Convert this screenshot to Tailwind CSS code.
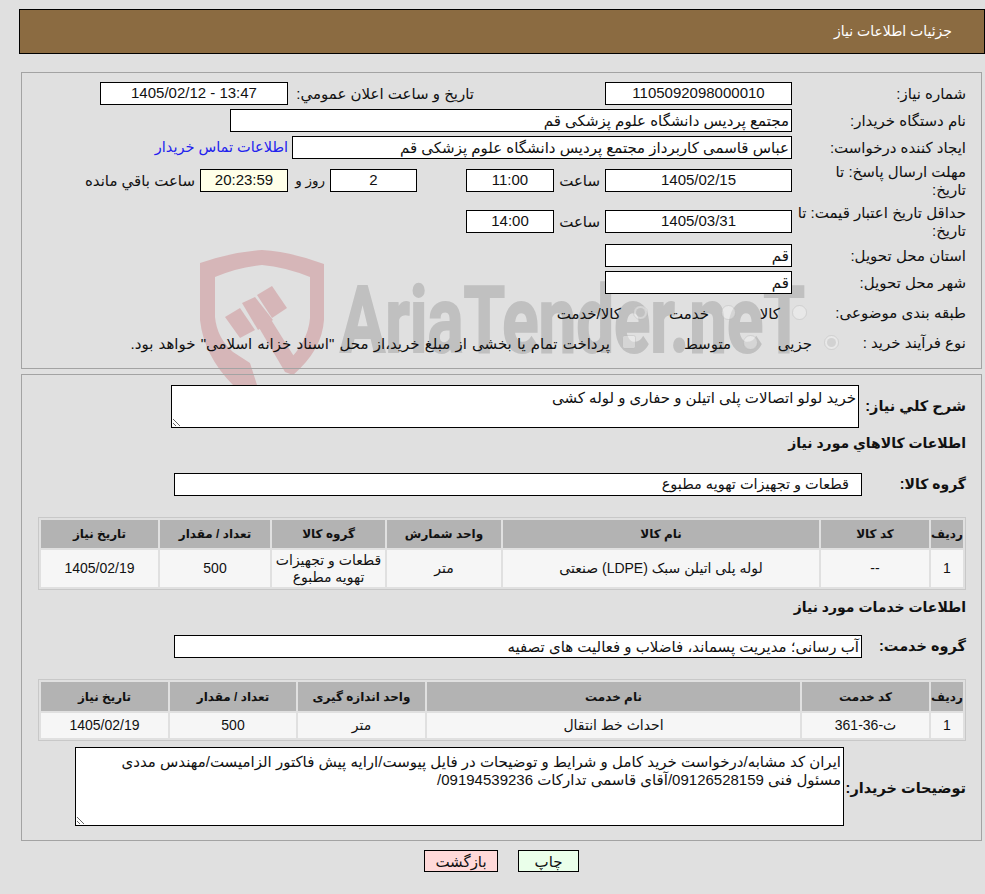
<!DOCTYPE html>
<html lang="fa" dir="rtl">
  <head>
    <meta charset="UTF-8" />
    <title>جزئیات اطلاعات نیاز</title>
    <script src="https://cdn.jsdelivr.net/npm/@tailwindcss/browser@4"></script>
  </head>
  <body class="relative h-[894px] w-[985px] overflow-hidden bg-[#e0e0e0] text-[15px] text-[#111] font-['Liberation_Sans','DejaVu_Sans',sans-serif]">
    <!-- watermark -->
    <svg class="absolute left-0 top-0 [direction:ltr]" width="985" height="400" viewBox="0 0 985 400">
      <g fill="#d6b6b8">
        <path d="M200 263 Q232 252 262 250 Q292 252 324 264 L324 320 Q322 350 293 375 L287 362 Q308 342 310 318 L310 277 Q285 267 262 265 Q238 267 215 277 L215 317 Q217 338 233 352 L250 363 L257 385 L233 385 Q204 356 200 320 Z" />
        <path d="M225 317 L240 308 L255 330 L240 338 Z" />
        <path d="M242 303 L255 297 L273 320 L258 330 Z" />
        <path d="M257 295 L272 286 L287 308 L272 318 Z" />
        <path d="M258 326 L270 318 L300 366 L293 375 L285 372 Z" />
      </g>
      <text x="340" y="352" textLength="465" lengthAdjust="spacingAndGlyphs" font-family="Roboto" font-weight="700" font-size="92" fill="#c0c0c0" stroke="#c0c0c0" stroke-width="2">AriaTender.neT</text>
    </svg>

    <div class="relative">
      <div class="absolute left-[19px] top-[9px] flex h-[45px] w-[966px] items-center border border-black bg-[#8b6b41] pr-[32px] text-[14px] text-white">جزئیات اطلاعات نیاز</div>
    </div>

    <div class="relative pt-[72px]">
      <!-- main info -->
      <div class="mr-[3px] h-[297px] w-[961px] border border-[#a3a3a3] pt-[9px]">
        <div class="flex h-[23px] items-center">
          <div class="w-[189px] pr-[15px] pt-[2px]">شماره نیاز:</div>
          <div class="flex h-[23px] w-[187px] items-center justify-center border border-black bg-white">1105092098000010</div>
          <div class="w-[318px] pr-[131px] pt-[2px]">تاریخ و ساعت اعلان عمومي:</div>
          <div dir="ltr" class="mr-[-1px] flex h-[23px] w-[188px] items-center justify-center border border-black bg-white">1405/02/12 - 13:47</div>
        </div>
        <div class="mt-[4px] flex h-[23px] items-center">
          <div class="w-[189px] pr-[15px] pt-[2px]">نام دستگاه خریدار:</div>
          <div class="flex h-[23px] w-[562px] items-center border border-black bg-white pr-[2px] pt-[1px]">مجتمع پردیس دانشگاه علوم پزشکی قم</div>
        </div>
        <div class="mt-[4px] flex h-[23px] items-center">
          <div class="w-[189px] pr-[15px] pt-[2px]">ایجاد کننده درخواست:</div>
          <div class="flex h-[23px] w-[500px] items-center border border-black bg-white pr-[2px] pt-[1px]">عباس قاسمی کاربرداز مجتمع پردیس دانشگاه علوم پزشکی قم</div>
          <a class="mr-[4px] pt-[1px] text-[14.5px] text-[#2222ee]" href="#">اطلاعات تماس خریدار</a>
        </div>
        <div class="mt-[10px] flex h-[23px] items-center">
          <div class="w-[189px] pl-[8px] pr-[15px] leading-[18px]">مهلت ارسال پاسخ: تا تاریخ:</div>
          <div class="flex h-[23px] w-[187px] items-center justify-center border border-black bg-white">1405/02/15</div>
          <div class="w-[51px] pr-[5px] pt-[2px]">ساعت</div>
          <div class="flex h-[23px] w-[88px] items-center justify-center border border-black bg-white">11:00</div>
          <div class="w-[49px]"></div>
          <div class="flex h-[23px] w-[87px] items-center justify-center border border-black bg-white">2</div>
          <div class="w-[42px] pr-[5px] pt-[2px] text-[13.5px]">روز و</div>
          <div class="flex h-[23px] w-[88px] items-center justify-center border border-black bg-[#ffffe8]">20:23:59</div>
          <div class="pr-[5px] pt-[2px]">ساعت باقي مانده</div>
        </div>
        <div class="mt-[18px] flex h-[23px] items-center">
          <div class="w-[189px] pr-[15px] leading-[18px]">حداقل تاریخ اعتبار قیمت: تا تاریخ:</div>
          <div class="flex h-[23px] w-[187px] items-center justify-center border border-black bg-white">1405/03/31</div>
          <div class="w-[51px] pr-[5px] pt-[2px]">ساعت</div>
          <div class="flex h-[23px] w-[88px] items-center justify-center border border-black bg-white">14:00</div>
        </div>
        <div class="mt-[11px] flex h-[23px] items-center">
          <div class="w-[189px] pr-[15px] pt-[2px]">استان محل تحویل:</div>
          <div class="flex h-[23px] w-[187px] items-center border border-black bg-white pr-[2px] pt-[1px]">قم</div>
        </div>
        <div class="mt-[4px] flex h-[23px] items-center">
          <div class="w-[189px] pr-[15px] pt-[2px]">شهر محل تحویل:</div>
          <div class="flex h-[23px] w-[187px] items-center border border-black bg-white pr-[2px] pt-[1px]">قم</div>
        </div>
        <div class="mt-[8px] flex h-[20px] items-center">
          <div class="w-[174px] pr-[15px] pt-[2px]">طبقه بندی موضوعی:</div>
          <input type="radio" disabled class="h-[15px] w-[15px] opacity-60" />
          <div class="w-[56px] pr-[12px] pt-[4px]">کالا</div>
          <input type="radio" disabled class="h-[15px] w-[15px] opacity-60" />
          <div class="w-[73px] pr-[12px] pt-[4px]">خدمت</div>
          <input type="radio" disabled checked class="h-[15px] w-[15px] opacity-60" />
          <div class="pr-[12px] pt-[4px]">کالا/خدمت</div>
        </div>
        <div class="mt-[10px] flex h-[20px] items-center">
          <div class="w-[142px] pr-[15px] pt-[2px]">نوع فرآیند خرید :</div>
          <input type="radio" disabled checked class="h-[15px] w-[15px] opacity-60" />
          <div class="w-[66px] pr-[12px] pt-[4px]">جزیی</div>
          <input type="radio" disabled class="h-[15px] w-[15px] opacity-60" />
          <div class="w-[107px] pr-[12px] pt-[4px]">متوسط</div>
          <input type="checkbox" disabled class="h-[14px] w-[14px] opacity-60" />
          <div class="pr-[12px] pt-[4px] [word-spacing:1px]">پرداخت تمام یا بخشی از مبلغ خرید،از محل "اسناد خزانه اسلامی" خواهد بود.</div>
        </div>
      </div>

      <!-- goods and services -->
      <div class="mr-[3px] mt-[5px] h-[467px] w-[961px] border border-[#a3a3a3] pt-[10px]">
        <div class="flex h-[43px] items-center">
          <div class="w-[122px] pr-[15px] text-[14.5px] font-bold">شرح کلي نیاز:</div>
          <textarea readonly class="h-[43px] w-[688px] border border-black bg-white px-[2px] pt-[3px] leading-[18px] outline-none">خرید لولو اتصالات پلی اتیلن و حفاری و لوله کشی</textarea>
        </div>
        <div class="mt-[5px] flex h-[20px] items-center pr-[15px] text-[14px] font-bold">اطلاعات كالاهاي مورد نیاز</div>
        <div class="mt-[20px] flex h-[23px] items-center">
          <div class="w-[119px] pr-[15px] text-[14px] font-bold">گروه کالا:</div>
          <div class="flex h-[23px] w-[688px] items-center border border-black bg-white pr-[12px] pt-[1px] text-[14.5px]">قطعات و تجهیزات تهویه مطبوع</div>
        </div>
        <table class="mr-[15px] mt-[21px] w-[928px] table-fixed border-separate border-spacing-[2px] border border-[#c8c8c8] text-center text-[14px]">
          <colgroup>
            <col class="w-[32px]" /><col class="w-[108px]" /><col class="w-[316px]" /><col class="w-[114px]" /><col class="w-[113px]" /><col class="w-[110px]" /><col class="w-[117px]" />
          </colgroup>
          <tr class="h-[28px] bg-[#b3b3b3] text-[12px] font-bold">
            <th>ردیف</th><th>کد کالا</th><th>نام کالا</th><th>واحد شمارش</th><th>گروه کالا</th><th>تعداد / مقدار</th><th>تاریخ نیاز</th>
          </tr>
          <tr class="h-[37px] bg-[#f6f6f6]">
            <td>1</td><td>--</td><td>لوله پلی اتیلن سبک (LDPE) صنعتی</td><td>متر</td><td class="leading-[17px]">قطعات و تجهیزات تهویه مطبوع</td><td>500</td><td>1405/02/19</td>
          </tr>
        </table>
        <div class="mt-[7px] flex h-[20px] items-center pr-[15px] text-[14px] font-bold">اطلاعات خدمات مورد نیاز</div>
        <div class="mt-[18px] flex h-[23px] items-center">
          <div class="w-[119px] pr-[15px] text-[14.5px] font-bold">گروه خدمت:</div>
          <div class="flex h-[23px] w-[688px] items-center border border-black bg-white pr-[2px] pt-[1px]">آب رسانی؛ مدیریت پسماند، فاضلاب و فعالیت های تصفیه</div>
        </div>
        <table class="mr-[15px] mt-[21px] w-[928px] table-fixed border-separate border-spacing-[2px] border border-[#c8c8c8] text-center text-[14px]">
          <colgroup>
            <col class="w-[32px]" /><col class="w-[127px]" /><col class="w-[373px]" /><col class="w-[127px]" /><col class="w-[126px]" /><col class="w-[127px]" />
          </colgroup>
          <tr class="h-[29px] bg-[#b3b3b3] text-[12px] font-bold">
            <th>ردیف</th><th>کد خدمت</th><th>نام خدمت</th><th>واحد اندازه گیری</th><th>تعداد / مقدار</th><th>تاریخ نیاز</th>
          </tr>
          <tr class="h-[25px] bg-[#f6f6f6]">
            <td>1</td><td>ث-36-361</td><td>احداث خط انتقال</td><td>متر</td><td>500</td><td>1405/02/19</td>
          </tr>
        </table>
        <div class="mt-[6px] flex h-[79px] items-center">
          <div class="w-[137px] pr-[15px] pt-[4px] text-[14.5px] font-bold">توضیحات خریدار:</div>
          <textarea readonly class="h-[79px] w-[769px] border border-black bg-white px-[2px] pt-[5px] leading-[18px] outline-none">ایران کد مشابه/درخواست خرید کامل و شرایط و توضیحات در فایل پیوست/ارایه پیش فاکتور الزامیست/مهندس مددی مسئول فنی 09126528159/آقای قاسمی تدارکات 09194539236/</textarea>
        </div>
      </div>

      <div class="mt-[9px] flex gap-[20px] pr-[406px]">
        <button class="h-[22px] w-[61px] border border-black bg-[#eaffea]">چاپ</button>
        <button class="h-[22px] w-[74px] border border-black bg-[#ffd9d9]">بازگشت</button>
      </div>
    </div>
  </body>
</html>
